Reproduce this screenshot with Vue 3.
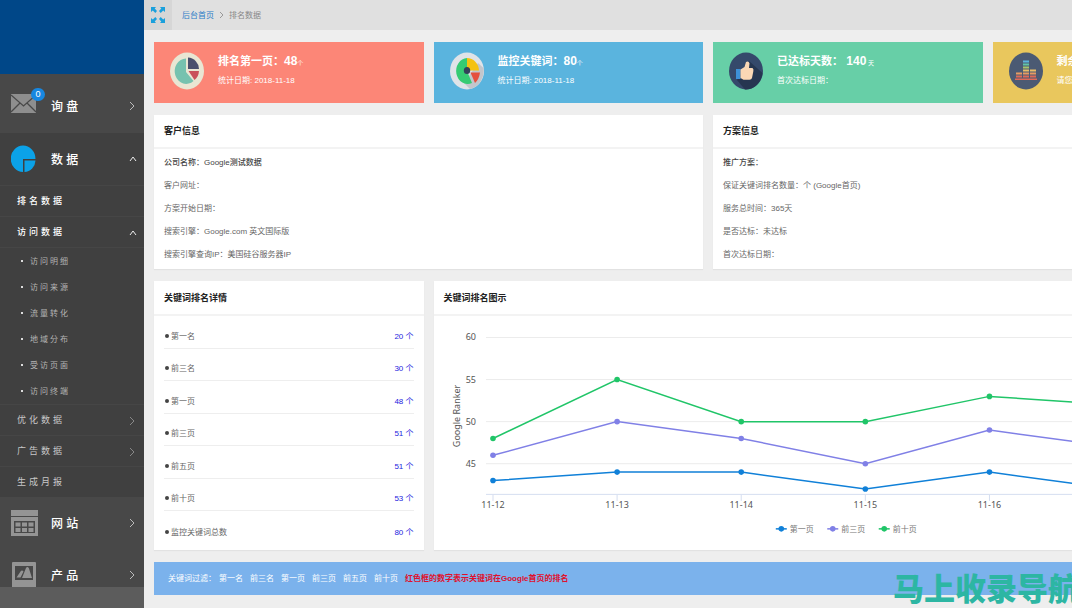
<script setup>
const visitLinks = ['访问明细', '访问来源', '流量转化', '地域分布', '受访页面', '访问终端']

const stats = [
  { id: 'first', color: 'red', label: '排名第一页：', value: '48', unit: '个', note: '统计日期: 2018-11-18' },
  { id: 'monitor', color: 'blue', label: '监控关键词：', value: '80', unit: '个', note: '统计日期: 2018-11-18' },
  { id: 'days', color: 'green', label: '已达标天数：', value: ' 140', unit: ' 天', note: '首次达标日期：' },
  { id: 'left', color: 'yellow', label: '剩余天数：', value: ' 225', unit: ' 天', note: '请您及时续费' },
]

const infoPanels = [
  {
    title: '客户信息',
    rows: ['公司名称：Google测试数据', '客户网址：', '方案开始日期：', '搜索引擎：Google.com 英文国际版', '搜索引擎查询IP：美国硅谷服务器IP'],
  },
  {
    title: '方案信息',
    rows: ['推广方案：', '保证关键词排名数量：个 (Google首页)', '服务总时间：365天', '是否达标：未达标', '首次达标日期：'],
  },
]

const ranks = [
  ['第一名', 20], ['前三名', 30], ['第一页', 48], ['前三页', 51], ['前五页', 51], ['前十页', 53], ['监控关键词总数', 80],
]

const days = ['11-12', '11-13', '11-14', '11-15', '11-16', '11-17', '11-18']
const ticks = [60, 55, 50, 45]
const series = [
  { name: '第一页', color: '#1080d8', values: [43, 44, 44, 42, 44, 42, 48] },
  { name: '前三页', color: '#8080e6', values: [46, 50, 48, 45, 49, 47, 51] },
  { name: '前十页', color: '#20c568', values: [48, 55, 50, 50, 53, 52, 53] },
]
const px = (i) => 59 + i * 124.2
const py = (v) => 21.5 + (60 - v) * 8.42
const line = (values) => values.map((v, i) => `${px(i)},${py(v)}`).join(' ')

const filters = ['第一名', '前三名', '第一页', '前三页', '前五页', '前十页']
</script>

<template>
  <div class="layout">
    <aside class="sidebar">
      <div class="brand"></div>
      <nav class="nav">
        <a href="#" class="main-item inbox">
          <span class="icon">
            <svg width="25" height="20" viewBox="0 0 25 20">
              <rect width="25" height="19" fill="#8e8e8e" />
              <path d="M0 1l12.500 11L25 1M0 18l9-9M25 18l-9-9" fill="none" stroke="#484848" stroke-width="1.300" />
            </svg>
            <span class="badge">0</span>
          </span>
          <span class="label">询 盘</span>
          <svg class="arrow" width="6" height="10" viewBox="0 0 6 10"><path d="M1 1l4 4-4 4" /></svg>
        </a>
        <div class="group">
          <a href="#" class="main-item">
            <span class="icon">
              <svg width="26" height="28" viewBox="0 0 26 28">
                <path d="M12 0.500a12 13 0 1 0 0 26.500V14h12.500A12.500 13.500 0 0 0 12 0.500z" fill="#0ba2e8" />
                <path d="M13.500 15.500h11a11.500 12 0 0 1-11 11.500z" fill="#0ba2e8" />
              </svg>
            </span>
            <span class="label">数 据</span>
            <svg class="arrow up" width="8" height="6" viewBox="0 0 8 6"><path d="M1 5l3-4 3 4" /></svg>
          </a>
          <a href="#" class="sub-item active">排名数据</a>
          <a href="#" class="sub-item active">
            访问数据
            <svg class="arrow up" width="8" height="6" viewBox="0 0 8 6"><path d="M1 5l3-4 3 4" /></svg>
          </a>
          <ul class="leafs">
            <li v-for="item in visitLinks" :key="item"><a href="#">{{ item }}</a></li>
          </ul>
          <a href="#" class="sub-item">
            优化数据
            <svg class="arrow dim" width="6" height="10" viewBox="0 0 6 10"><path d="M1 1l4 4-4 4" /></svg>
          </a>
          <a href="#" class="sub-item">
            广告数据
            <svg class="arrow dim" width="6" height="10" viewBox="0 0 6 10"><path d="M1 1l4 4-4 4" /></svg>
          </a>
          <a href="#" class="sub-item">生成月报</a>
        </div>
        <a href="#" class="main-item">
          <span class="icon">
            <svg width="27" height="26" viewBox="0 0 27 26">
              <path d="M0 0h27v6H0zM0 7h27v19H0z" fill="#949494" />
              <path d="M3 11h21v12H3z" fill="#484848" />
              <path d="M4.500 12.500h5v4h-5zM11 12.500h5v4h-5zM17.500 12.500h5v4h-5zM4.500 18h5v4h-5zM11 18h5v4h-5zM17.500 18h5v4h-5z" fill="#949494" />
            </svg>
          </span>
          <span class="label">网 站</span>
          <svg class="arrow" width="6" height="10" viewBox="0 0 6 10"><path d="M1 1l4 4-4 4" /></svg>
        </a>
        <a href="#" class="main-item">
          <span class="icon">
            <svg width="26" height="26" viewBox="0 0 26 26">
              <rect x="1" width="24" height="26" rx="1" fill="#949494" />
              <path d="M4 4h18v14H4z" fill="#484848" />
              <path d="M5.500 15.500l4-6q1.500-2 3 0l-3 6zM11 16l4-10q1.200-2 2.800 0l3.200 10z" fill="#949494" />
            </svg>
          </span>
          <span class="label">产 品</span>
          <svg class="arrow" width="6" height="10" viewBox="0 0 6 10"><path d="M1 1l4 4-4 4" /></svg>
        </a>
      </nav>
      <div class="side-foot"></div>
    </aside>

    <main class="main">
      <header class="topbar">
        <button class="expand" type="button" aria-label="全屏">
          <svg width="14" height="16" viewBox="0 0 14 16">
            <path d="M0 0h5L3.700 1.500 6 4 4.300 6 1.800 3.500 0 5zM14 0v5l-1.800-1.500L9.700 6 8 4l2.300-2.500L9 0zM0 16v-5l1.800 1.500L4.300 10 6 12l-2.300 2.500L5 16zM14 16H9l1.300-1.500L8 12l1.700-2 2.500 2.500L14 11z" fill="#1ba0dc" />
          </svg>
        </button>
        <a href="#" class="home">后台首页</a>
        <svg class="sep" width="5" height="8" viewBox="0 0 5 8"><path d="M1 1l3 3-3 3" fill="none" stroke="#999" /></svg>
        <span class="here">排名数据</span>
      </header>

      <div class="content">
        <section v-for="s in stats" :key="s.id" class="stat" :class="s.color">
          <svg v-if="s.id === 'first'" width="34" height="38" viewBox="0 0 34 38">
            <ellipse cx="17" cy="19" rx="17" ry="18.500" fill="#e9e6d3" />
            <path d="M16 6.500A11.500 12.700 0 1 0 23.500 29L16 20z" fill="#76c2af" />
            <path d="M18 5.500A11.500 12 0 0 1 29 17H18z" fill="#4a4f6c" />
            <path d="M18.500 19H29q-.5 6-4.500 9z" fill="#c9515a" />
          </svg>
          <svg v-else-if="s.id === 'monitor'" width="34" height="38" viewBox="0 0 34 38">
            <ellipse cx="17" cy="19" rx="17" ry="18.500" fill="#dfe3e8" />
            <path d="M28 11l5.500 5A17 18.500 0 0 1 20 37l-6-6z" fill="#c2c6cc" />
            <path d="M17 6A11.500 13 0 1 0 22 31L17 19z" fill="#36cb73" />
            <path d="M17 6a12 13 0 0 1 12 12.500H17z" fill="#f4c211" />
            <path d="M20.500 20.500H30q-1 7-5 10.500z" fill="#e5503e" />
            <ellipse cx="17" cy="18.500" rx="3.200" ry="3.600" fill="#33425a" />
          </svg>
          <svg v-else-if="s.id === 'days'" width="34" height="38" viewBox="0 0 34 38">
            <ellipse cx="17" cy="19" rx="17" ry="18.500" fill="#35496b" />
            <path d="M20 9l13.500 12A17 18.500 0 0 1 16 37.500L8 28z" fill="#263651" />
            <path d="M7 17h4.500v10H7z" fill="#3d91d8" />
            <path d="M11.500 17.500l4-2.500 1.500-5q2.500-1.500 3.500 1.200L20 16h3.500q1.500 1 .8 3.500L23 26q-.5 1.800-2.500 1.800h-6l-3-1.800z" fill="#fbd7b5" />
          </svg>
          <svg v-else width="34" height="38" viewBox="0 0 34 38">
            <ellipse cx="17" cy="19" rx="17" ry="18.500" fill="#4b5a73" />
            <path d="M14 8.500h6v2h-6z" fill="#5cb5dc" />
            <path d="M14 11.500h6v2h-6z" fill="#62c4a6" />
            <path d="M14 14.500h6v2h-6z" fill="#a6c46c" />
            <path d="M14 17.500h6v2h-6zM21 17.500h6v2h-6z" fill="#e8bd68" />
            <path d="M7 20.500h6v2H7zM14 20.500h6v2h-6zM21 20.500h6v2h-6z" fill="#e79b62" />
            <path d="M7 23.500h6v2H7zM14 23.500h6v2h-6zM21 23.500h6v2h-6zM6 26.500h22v1.500H6z" fill="#de6a58" />
          </svg>
          <div class="stat-text">
            <h3>{{ s.label }}<b>{{ s.value }}</b><small>{{ s.unit }}</small></h3>
            <p>{{ s.note }}</p>
          </div>
        </section>

        <section v-for="p in infoPanels" :key="p.title" class="panel half">
          <h2>{{ p.title }}</h2>
          <ul class="info">
            <li v-for="r in p.rows" :key="r">{{ r }}</li>
          </ul>
        </section>

        <section class="panel">
          <h2 class="tall">关键词排名详情</h2>
          <ul class="ranks">
            <li v-for="[name, n] in ranks" :key="name">
              <span><i class="dot"></i>{{ name }}</span><a href="#">{{ n }} 个</a>
            </li>
          </ul>
        </section>

        <section class="panel wide">
          <h2 class="tall">关键词排名图示</h2>
          <svg class="chart" viewBox="0 0 829 234">
            <g v-for="t in ticks" :key="t">
              <line x1="52" x2="814" :y1="py(t)" :y2="py(t)" stroke="#ececec" />
              <text x="42" :y="py(t) + 3" text-anchor="end">{{ t }}</text>
            </g>
            <text class="axis-title" x="26" y="100" text-anchor="middle" transform="rotate(-90 26 100)">Google Ranker</text>
            <line x1="52" x2="814" y1="178.500" y2="178.500" stroke="#d5def0" />
            <g v-for="(d, i) in days" :key="d">
              <line :x1="px(i)" :x2="px(i)" y1="179" y2="185" stroke="#d5def0" />
              <text :x="px(i)" y="192" text-anchor="middle">{{ d }}</text>
            </g>
            <g v-for="s in series" :key="s.name" :fill="s.color">
              <polyline :points="line(s.values)" fill="none" :stroke="s.color" stroke-width="1.500" />
              <circle v-for="(v, i) in s.values" :key="i" :cx="px(i)" :cy="py(v)" r="2.800" />
            </g>
            <g v-for="(s, i) in series" :key="s.name" :transform="`translate(${342 + i * 51.5} 213)`">
              <line x1="0" x2="11" y1="0" y2="0" :stroke="s.color" stroke-width="1.500" />
              <circle cx="5.500" cy="0" r="2.800" :fill="s.color" />
              <text class="legend" x="14" y="3">{{ s.name }}</text>
            </g>
          </svg>
        </section>

        <div class="filter">
          <span>关键词过滤：</span>
          <a v-for="f in filters" :key="f" href="#">{{ f }}</a>
          <strong>红色框的数字表示关键词在Google首页的排名</strong>
        </div>
      </div>
      <div class="watermark">马上收录导航</div>
    </main>
  </div>
</template>

<style>
body {
  margin: 0;
  background: #eee;
}
</style>

<style scoped>
.layout {
  display: flex;
  height: 100vh;
  overflow: hidden;
  font: 8px/13px "Liberation Sans", "Noto Sans CJK SC", sans-serif;
  color: #666;
}
a {
  color: inherit;
  text-decoration: none;
}
ul, h2, h3, p {
  margin: 0;
  padding: 0;
  list-style: none;
}
svg {
  display: block;
}

.sidebar {
  flex: none;
  display: flex;
  flex-direction: column;
  width: 144px;
  background: #484848;
  color: #fff;
}
.brand {
  flex: none;
  height: 74px;
  background: #004788;
}
.nav {
  flex: 1;
  min-height: 0;
  overflow: hidden;
}
.side-foot {
  flex: none;
  height: 21px;
  background: #5c5c5c;
}
.main-item {
  display: flex;
  align-items: center;
  height: 52px;
  padding: 0 9px 0 11px;
  font-size: 12px;
  font-weight: 500;
}
.inbox {
  height: 54px;
  padding-top: 5px;
}
.icon {
  position: relative;
  width: 40px;
}
.inbox .icon {
  padding-bottom: 4px;
}
.label {
  padding-top: 2px;
}
.badge {
  position: absolute;
  top: -6px;
  left: 20px;
  width: 14px;
  border-radius: 7px;
  background: #1787e0;
  font-size: 9px;
  line-height: 13px;
  text-align: center;
}
.arrow {
  margin-left: auto;
  fill: none;
  stroke: #bbb;
}
.arrow.up {
  margin-right: -2px;
  stroke: #eee;
}
.arrow.dim {
  stroke: #888;
}
.group {
  background: #404040;
}
.sub-item {
  display: flex;
  align-items: center;
  box-sizing: border-box;
  height: 31px;
  padding: 1px 9px 0 17px;
  border-top: 1px solid #464646;
  color: #c8c8c8;
  font-size: 9px;
  letter-spacing: 3px;
}
.sub-item.active {
  color: #fff;
  font-weight: 500;
}
.leafs {
  border-top: 1px solid #464646;
}
.leafs li {
  display: flex;
  align-items: center;
  height: 26px;
  padding-left: 21px;
  color: #b4b4b4;
  letter-spacing: 2px;
}
.leafs li::before {
  content: "";
  width: 2px;
  height: 2px;
  margin-right: 7px;
  background: #ddd;
}

.main {
  position: relative;
  flex: 1;
  min-width: 0;
  overflow: hidden;
  background: #eee;
}
.topbar {
  display: flex;
  align-items: center;
  height: 30px;
  background: #e0e0e0;
}
.expand {
  display: flex;
  align-items: center;
  justify-content: center;
  width: 28px;
  height: 30px;
  padding: 0;
  border: 0;
  background: #d6d6d6;
}
.home {
  margin-left: 10px;
  color: #2a7cc7;
}
.sep {
  margin: 0 5px;
}
.here {
  color: #888;
}

.content {
  display: grid;
  grid-template-columns: repeat(4, 1fr);
  gap: 12px 10px;
  box-sizing: border-box;
  min-width: 1128px;
  padding: 12px 10px;
}
.stat {
  display: flex;
  box-sizing: border-box;
  height: 61px;
  padding: 10px 16px;
  color: #fff;
}
.red { background: #fc8677; }
.blue { background: #5ab4de; }
.green { background: #67cfa7; }
.yellow { background: #e9c75d; }
.stat-text {
  margin-left: 14px;
}
.stat h3 {
  font-size: 11px;
  line-height: 18px;
  white-space: pre;
}
.stat h3 b {
  font-size: 12px;
}
.stat h3 small {
  font-size: 6px;
  font-weight: 400;
}
.stat p {
  line-height: 18px;
}

.panel {
  display: flex;
  flex-direction: column;
  background: #fff;
  box-shadow: 0 1px 1px #e2e2e2;
}
.half {
  grid-column: span 2;
}
.wide {
  grid-column: span 3;
}
.panel h2 {
  padding: 1px 10px 0;
  border-bottom: 2px solid #f3f3f3;
  color: #222;
  font-size: 9px;
  line-height: 31px;
}
.panel h2.tall {
  padding-top: 2px;
}
.info {
  padding: 2px 10px 3px;
}
.info li {
  line-height: 23px;
}
.info li:first-child {
  color: #444;
  font-weight: 500;
}
.ranks {
  flex: 1;
  display: grid;
  grid-template-rows: repeat(7, 1fr);
  padding: 0 10px 6px;
}
.ranks li {
  display: flex;
  align-items: flex-end;
  justify-content: space-between;
  padding-bottom: 5px;
  border-bottom: 1px solid #eee;
}
.ranks li:last-child {
  border-bottom: 0;
}
.ranks a {
  color: #1d1dde;
}
.dot {
  display: inline-block;
  width: 4px;
  height: 4px;
  margin: 0 2px 1px 1px;
  border-radius: 50%;
  background: #444;
}
.chart {
  width: 100%;
  height: auto;
}
.chart text {
  fill: #555;
  font: 9px "Noto Sans", "Noto Sans CJK SC", sans-serif;
}
.chart .legend {
  fill: #777;
  font-size: 8px;
}

.filter {
  grid-column: 1 / -1;
  display: flex;
  align-items: center;
  gap: 7px;
  box-sizing: border-box;
  height: 33px;
  padding: 0 14px;
  background: #7bb2ec;
  color: #fff;
}
.filter span {
  margin-right: -4px;
}
.filter strong {
  color: #e0102c;
}
.watermark {
  position: absolute;
  right: -7px;
  bottom: 6px;
  color: #2db6a3;
  font: 900 31px/31px "Noto Sans CJK SC", sans-serif;
  white-space: nowrap;
}
</style>
